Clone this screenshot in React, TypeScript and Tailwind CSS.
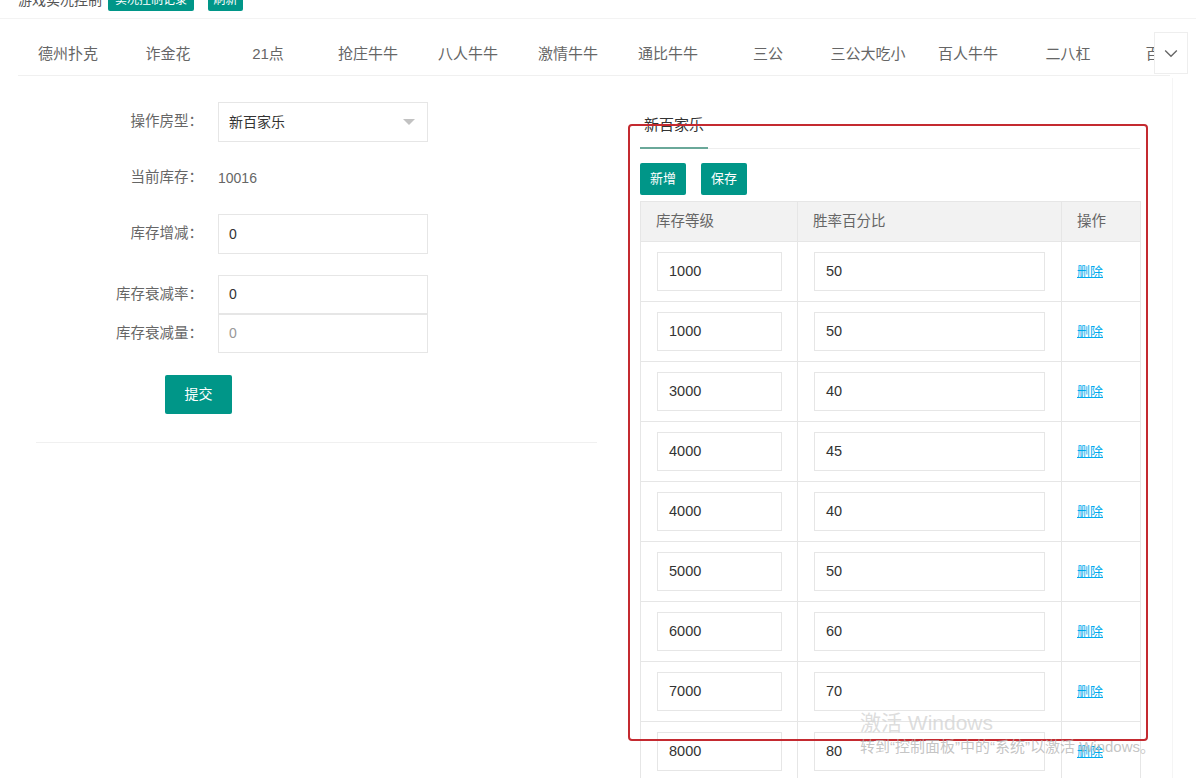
import React from 'react';

const tabs = ['德州扑克', '诈金花', '21点', '抢庄牛牛', '八人牛牛', '激情牛牛', '通比牛牛', '三公', '三公大吃小', '百人牛牛', '二八杠', '百家乐'];

const rows = [
  ['1000', '50'],
  ['1000', '50'],
  ['3000', '40'],
  ['4000', '45'],
  ['4000', '40'],
  ['5000', '50'],
  ['6000', '60'],
  ['7000', '70'],
  ['8000', '80'],
];

function FormRow({ label, children, className = '' }: { label: string; children: React.ReactNode; className?: string }) {
  return (
    <div className={`flex items-center ${className}`}>
      <div className="w-[187px] pr-[2px] text-right text-[14.5px] text-[#666]">{label}：</div>
      <div className="ml-[13px] w-[210px]">{children}</div>
    </div>
  );
}

export default function App() {
  return (
    <div className="relative h-[778px] w-[1196px] overflow-hidden bg-white font-['Liberation_Sans','Noto_Sans_CJK_SC',sans-serif] text-[#333]">
      {/* cut-off header strip */}
      <div className="h-[19px] overflow-hidden border-b border-[#f3f3f3]">
        <div className="-mt-[11px] flex h-[22px] items-center pl-[18px]">
          <span className="text-[14px] text-[#555]">游戏实况控制</span>
          <span className="ml-[6px] flex h-[22px] w-[86px] items-center justify-center rounded-[2px] bg-[#009688] text-[12px] text-white">实况控制记录</span>
          <span className="ml-[14px] flex h-[22px] w-[35px] items-center justify-center rounded-[2px] bg-[#009688] text-[12px] text-white">刷新</span>
        </div>
      </div>

      {/* game tabs */}
      <div className="relative mx-[18px] mt-[13px] h-[44px] w-[1152px] border-b border-[#f0f0f0]">
        <div className="flex h-[44px] w-[1136px] overflow-hidden">
          {tabs.map(t => (
            <div key={t} className="flex h-[44px] w-[100px] shrink-0 items-center justify-center text-[15px] text-[#666]">
              {t}
            </div>
          ))}
        </div>
        <div className="absolute right-[-18px] top-0 flex h-[42px] w-[34px] items-center justify-center border border-[#eee] bg-white">
          <svg viewBox="0 0 24 24" className="h-[20px] w-[20px]" fill="none" stroke="#666" strokeWidth="1.6">
            <path d="M5 9l7 7 7-7" />
          </svg>
        </div>
      </div>

      <div className="flex">
        {/* left form */}
        <div className="w-[640px] shrink-0 pl-[18px]">
          <FormRow label="操作房型" className="mt-[26px] h-[40px]">
            <div className="flex h-[40px] items-center justify-between border border-[#e6e6e6] pl-[10px] pr-[12px] text-[14px] text-[#333]">
              <span>新百家乐</span>
              <span className="h-0 w-0 border-x-[6px] border-t-[6px] border-x-transparent border-t-[#c2c2c2]" />
            </div>
          </FormRow>
          <FormRow label="当前库存" className="mt-[16px] h-[40px]">
            <span className="text-[14px] text-[#666]">10016</span>
          </FormRow>
          <FormRow label="库存增减" className="mt-[16px] h-[40px]">
            <div className="flex h-[40px] items-center border border-[#e6e6e6] pl-[10px] text-[14px]">0</div>
          </FormRow>
          <FormRow label="库存衰减率" className="mt-[21px] h-[39px]">
            <div className="flex h-[39px] items-center border border-[#e6e6e6] pl-[10px] text-[14px]">0</div>
          </FormRow>
          <FormRow label="库存衰减量" className="h-[39px]">
            <div className="flex h-[39px] items-center border border-[#e6e6e6] pl-[10px] text-[14px] text-[#999]">0</div>
          </FormRow>
          <div className="ml-[147px] mt-[22px] flex h-[39px] w-[67px] items-center justify-center rounded-[2px] bg-[#009688] text-[14px] text-white">
            提交
          </div>
          <div className="ml-[18px] mt-[28px] h-px w-[561px] bg-[#f0f0f0]" />
        </div>

        {/* right rate table */}
        <div className="w-[500px] shrink-0">
          <div className="mt-[31px] flex h-[42px] border-b border-[#eee]">
            <div className="flex h-[42px] w-[68px] items-center justify-center border-b-2 border-[#6aa899] pb-[4px] text-[15px] text-[#333]">
              新百家乐
            </div>
          </div>
          <div className="mt-[14px] flex gap-[15px]">
            <span className="flex h-[32px] w-[46px] items-center justify-center rounded-[2px] bg-[#009688] text-[13px] text-white">新增</span>
            <span className="flex h-[32px] w-[46px] items-center justify-center rounded-[2px] bg-[#009688] text-[13px] text-white">保存</span>
          </div>
          <table className="mt-[6px] w-[500px] table-fixed border-collapse text-[14.5px]">
            <colgroup>
              <col className="w-[157px]" />
              <col className="w-[264px]" />
              <col className="w-[79px]" />
            </colgroup>
            <thead>
              <tr className="h-[40px] bg-[#f2f2f2] text-left text-[#666]">
                <th className="border border-[#e6e6e6] pl-[15px] font-normal">库存等级</th>
                <th className="border border-[#e6e6e6] pl-[15px] font-normal">胜率百分比</th>
                <th className="border border-[#e6e6e6] pl-[15px] font-normal">操作</th>
              </tr>
            </thead>
            <tbody>
              {rows.map((r, i) => (
                <tr key={i} className="h-[60px]">
                  <td className="border border-[#e6e6e6] pl-[16px]">
                    <div className="flex h-[39px] w-[125px] items-center border border-[#e6e6e6] pl-[11px]">{r[0]}</div>
                  </td>
                  <td className="border border-[#e6e6e6] pl-[16px]">
                    <div className="flex h-[39px] w-[231px] items-center border border-[#e6e6e6] pl-[11px]">{r[1]}</div>
                  </td>
                  <td className="border border-[#e6e6e6] pl-[15px]">
                    <span className="text-[13px] text-[#01AAED] underline">删除</span>
                  </td>
                </tr>
              ))}
            </tbody>
          </table>
        </div>
      </div>

      {/* faint card edge */}
      <div className="absolute left-[1172px] top-[78px] h-[700px] w-px bg-[#f5f5f5]" />

      {/* red annotation frame */}
      <div className="pointer-events-none absolute left-[628px] top-[124px] h-[617px] w-[520px] rounded-[4px] border-2 border-[#c42a30]" />

      {/* windows activation watermark */}
      <div className="pointer-events-none absolute left-[860px] top-[707px] text-[21px] text-[#d4d4d4]/80">激活 Windows</div>
      <div className="pointer-events-none absolute left-[860px] top-[736px] text-[15px] text-[#b5b5b5]/80">转到“控制面板”中的“系统”以激活 Windows。</div>
    </div>
  );
}
